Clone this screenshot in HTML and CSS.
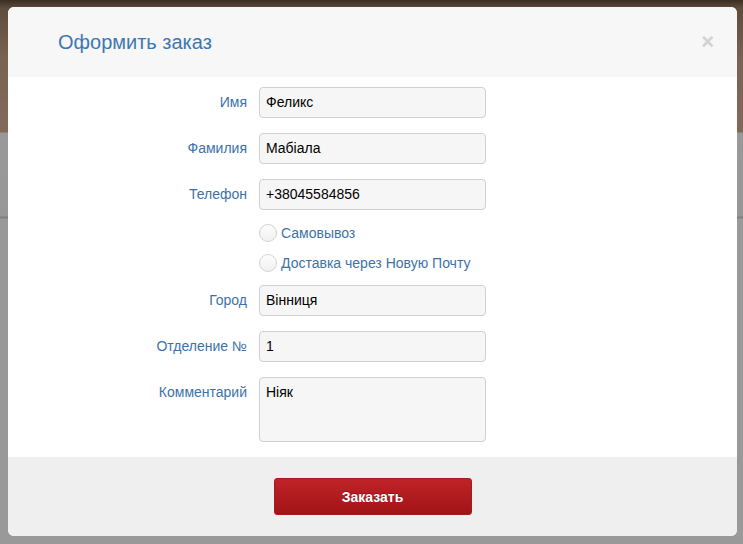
FILE: index.html
```html
<!DOCTYPE html>
<html lang="ru">
<head>
<meta charset="utf-8">
<title>Оформить заказ</title>
<link rel="stylesheet" href="styles.css">
</head>
<body>
<div class="backdrop">
  <div class="modal">
    <div class="modal-header">
      <h2 class="modal-title">Оформить заказ</h2>
      <span class="close">×</span>
    </div>
    <form class="modal-body">
      <label class="lbl">Имя</label>
      <div class="field">Феликс</div>

      <label class="lbl">Фамилия</label>
      <div class="field">Мабіала</div>

      <label class="lbl">Телефон</label>
      <div class="field">+38045584856</div>

      <div class="radios">
        <div class="radio"><span class="circle"></span><span class="rtext">Самовывоз</span></div>
        <div class="radio"><span class="circle"></span><span class="rtext">Доставка через Новую Почту</span></div>
      </div>

      <label class="lbl">Город</label>
      <div class="field">Вінниця</div>

      <label class="lbl">Отделение №</label>
      <div class="field">1</div>

      <label class="lbl">Комментарий</label>
      <div class="field area">Ніяк</div>
    </form>
    <div class="modal-footer">
      <button type="button" class="btn">Заказать</button>
    </div>
  </div>
</div>
</body>
</html>
```
FILE: styles.css
```css
html, body {
  margin: 0;
  padding: 0;
}
body {
  width: 743px;
  height: 544px;
  overflow: hidden;
  font-family: "Liberation Sans", Arial, sans-serif;
}
.backdrop {
  height: 544px;
  padding: 7px 0 0 8px;
  box-sizing: border-box;
  background:
    linear-gradient(to bottom, #3a2e22 0px, #5e4c3c 8px, #7a6352 60px, #83695a 132px, #999999 133px, #979797 216px, #7f7f7f 217px, #7f7f7f 218px, #999999 219px, #999999 100%);
}
.modal {
  width: 729px;
  height: 529px;
  border-radius: 6px;
  overflow: hidden;
  background: #ffffff;
  display: flex;
  flex-direction: column;
}
.modal-header {
  height: 70px;
  flex: none;
  background: #f7f7f7;
  display: flex;
  align-items: center;
  justify-content: space-between;
  padding: 0 23px 0 50px;
}
.modal-title {
  margin: 0;
  font-size: 20px;
  font-weight: normal;
  color: #3d78b2;
}
.close {
  font-size: 22px;
  font-weight: bold;
  color: #d2d2d2;
  line-height: 1;
}
.modal-body {
  margin: 0;
  flex: 1;
  padding: 10px 0 15px 0;
  display: grid;
  grid-template-columns: 239px 227px;
  column-gap: 12px;
  row-gap: 15px;
  align-content: start;
}
.lbl {
  text-align: right;
  font-size: 14px;
  color: #3c72a8;
  line-height: 31px;
  height: 31px;
}
.field {
  box-sizing: border-box;
  height: 31px;
  border: 1px solid #d0d0d0;
  border-radius: 4px;
  background: #f6f6f6;
  padding: 0 6px;
  font-size: 14px;
  line-height: 29px;
  color: #000;
}
.field.area {
  height: 65px;
  line-height: 1.2;
  padding-top: 6px;
}
.radios {
  grid-column: 2;
  display: flex;
  flex-direction: column;
  gap: 10px;
  margin: -2px 0 -3px;
}
.radio {
  height: 20px;
  display: flex;
  align-items: center;
  gap: 4px;
  white-space: nowrap;
}
.circle {
  width: 18px;
  height: 18px;
  box-sizing: border-box;
  border: 1px solid #d3d3d3;
  border-radius: 50%;
  background: linear-gradient(#fdfdfd, #f0f0f0);
  flex: none;
}
.rtext {
  font-size: 14px;
  color: #3c72a8;
}
.modal-footer {
  height: 79px;
  flex: none;
  background: #efefef;
  display: flex;
  justify-content: center;
  padding-top: 21px;
  box-sizing: border-box;
}
.btn {
  width: 198px;
  height: 37px;
  border: 1px solid #a51a1e;
  border-radius: 3px;
  background: linear-gradient(to bottom, #bf2328, #a11416);
  color: #ffffff;
  font-family: "Liberation Sans", Arial, sans-serif;
  font-size: 14px;
  font-weight: bold;
  text-shadow: 0 -1px 0 rgba(0,0,0,0.25);
  padding: 0;
}
```
